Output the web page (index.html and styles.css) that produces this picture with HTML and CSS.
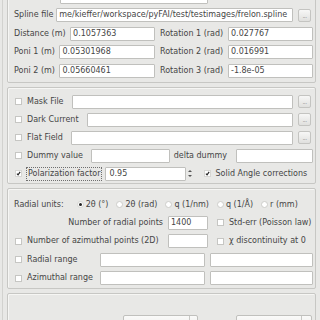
FILE: index.html
```html
<!DOCTYPE html>
<html lang="en">
<head>
  <meta charset="UTF-8" />
  <title>pyFAI integration</title>
  <link rel="stylesheet" href="styles.css">
</head>
<body>
  <div class="window">

    <div class="group geometry">
      <div class="row">
        <span class="input top-input"></span>
      </div>
      <div class="row">
        <span class="label">Spline file</span>
        <span class="input grow">me/kieffer/workspace/pyFAI/test/testimages/frelon.spline</span>
        <span class="dots">...</span>
      </div>
      <div class="pair">
        <div class="half"><span class="label">Distance (m)</span><span class="input grow">0.1057363</span></div>
        <div class="half"><span class="label">Rotation 1 (rad)</span><span class="input rot">0.027767</span></div>
      </div>
      <div class="pair">
        <div class="half"><span class="label">Poni 1 (m)</span><span class="input grow">0.05301968</span></div>
        <div class="half"><span class="label">Rotation 2 (rad)</span><span class="input rot">0.016991</span></div>
      </div>
      <div class="pair">
        <div class="half"><span class="label">Poni 2 (m)</span><span class="input grow">0.05660461</span></div>
        <div class="half"><span class="label">Rotation 3 (rad)</span><span class="input rot">-1.8e-05</span></div>
      </div>
    </div>

    <div class="group corrections">
      <div class="row">
        <span class="check"></span><span class="label wide">Mask File</span>
        <span class="input grow"></span><span class="dots">...</span>
      </div>
      <div class="row">
        <span class="check"></span><span class="label wide">Dark Current</span>
        <span class="input grow"></span><span class="dots">...</span>
      </div>
      <div class="row">
        <span class="check"></span><span class="label wide">Flat Field</span>
        <span class="input grow"></span><span class="dots">...</span>
      </div>
      <div class="row">
        <span class="check"></span><span class="label wide">Dummy value</span>
        <span class="input grow"></span>
        <span class="label delta">delta dummy</span>
        <span class="input dummy"></span>
      </div>
      <div class="row">
        <span class="check on"><svg viewBox="0 0 7 7"><path d="M1.3 3.6 L2.9 5.3 L5.8 1.2" /></svg></span>
        <span class="label focus">Polarization factor</span>
        <span class="input spin">0.95</span>
        <span class="arrows"><i class="up"></i><i class="down"></i></span>
        <span class="check on solid"><svg viewBox="0 0 7 7"><path d="M1.3 3.6 L2.9 5.3 L5.8 1.2" /></svg></span>
        <span class="label">Solid Angle corrections</span>
      </div>
    </div>

    <div class="group integration">
      <div class="row units">
        <span class="label">Radial units:</span>
        <span class="radio on"></span><span class="label">2θ (°)</span>
        <span class="radio"></span><span class="label">2θ (rad)</span>
        <span class="radio"></span><span class="label">q (1/nm)</span>
        <span class="radio"></span><span class="label">q (1/Å)</span>
        <span class="radio"></span><span class="label">r (mm)</span>
      </div>
      <div class="points">
        <span class="label right">Number of radial points</span>
        <span class="input">1400</span>
        <span class="opt"><span class="check"></span><span class="label">Std-err (Poisson law)</span></span>
      </div>
      <div class="points">
        <span class="opt"><span class="check"></span><span class="label">Number of azimuthal points (2D)</span></span>
        <span class="input"></span>
        <span class="opt"><span class="check"></span><span class="label">χ discontinuity at 0</span></span>
      </div>
      <div class="range">
        <span class="opt"><span class="check"></span><span class="label">Radial range</span></span>
        <span class="input"></span>
        <span class="input"></span>
      </div>
      <div class="range">
        <span class="opt"><span class="check"></span><span class="label">Azimuthal range</span></span>
        <span class="input"></span>
        <span class="input"></span>
      </div>
    </div>

    <div class="group actions">
      <div class="row">
        <span class="combo first"><span class="arrow-box"></span></span>
        <span class="combo second"><span class="arrow-box"></span></span>
      </div>
    </div>

  </div>
</body>
</html>
```

FILE: styles.css
```css
* {
  box-sizing: border-box;
  margin: 0;
  padding: 0;
}
body {
  background: #e8e8e6;
  font-family: "DejaVu Sans", sans-serif;
  font-size: 8px;
  color: #454545;
  width: 320px;
  height: 320px;
  overflow: hidden;
}
.window {
  margin-left: 2px;
  border-left: 1px solid #d2d2cf;
  height: 360px;
  padding: 0 4px 0 4px;
}
.group {
  border: 1px solid #c7c7c4;
  border-radius: 2px;
  box-shadow: inset 1px 1px 0 #f6f6f4;
  padding: 7px 2px 2px 6px;
  display: flex;
  flex-direction: column;
  gap: 4.4px;
  margin-bottom: 4px;
}
.geometry {
  margin-top: -14px;
  padding-top: 3px;
  padding-bottom: 4px;
}
.corrections {
  gap: 4px;
}
.integration {
  padding-top: 9px;
  padding-bottom: 3px;
}
.actions {
  padding-top: 21px;
  height: 60px;
}

.row {
  display: flex;
  align-items: center;
  height: 14px;
}
.label {
  white-space: nowrap;
  line-height: 14px;
}
.input {
  display: block;
  height: 14px;
  background: #fff;
  border: 1px solid #c0c0bd;
  border-radius: 1px;
  padding-left: 2px;
  line-height: 12px;
  white-space: nowrap;
  overflow: hidden;
}
.grow {
  flex: 1;
  min-width: 0;
}
.top-input {
  margin-left: 46px;
  width: 148px;
}
.row .label + .input {
  margin-left: 3px;
}
.row .label.wide + .input {
  margin-left: 8px;
}
.dots {
  width: 13px;
  height: 13px;
  margin-left: 5px;
  margin-right: 2px;
  border: 1px solid #c4c4c1;
  border-radius: 2px;
  background: linear-gradient(#f7f7f6, #e0e0de);
  color: #888;
  font-size: 6px;
  line-height: 12px;
  text-align: center;
  letter-spacing: -0.5px;
}

.pair {
  display: grid;
  grid-template-columns: 141px 1fr;
  column-gap: 5px;
  height: 14px;
}
.half {
  display: flex;
  align-items: center;
}
.half .input {
  margin-left: 4px;
}
.half .label + .input.grow {
  margin-left: 4.5px;
}
.rot {
  width: 85px;
  margin-left: auto !important;
}

.check {
  display: inline-block;
  flex: none;
  width: 7px;
  height: 7px;
  margin: 0 5px 0 1px;
  background: #fff;
  border: 1px solid #c6c6c3;
}
.check svg {
  display: block;
  width: 5px;
  height: 5px;
  fill: none;
  stroke: #222;
  stroke-width: 1.6;
}
.check.on {
  border-color: #d6d6d3;
}
.delta {
  margin-left: 4px;
}
.delta + .input {
  margin-left: 9px !important;
}
.dummy {
  width: 77px;
}
.focus {
  border: 1px dotted #6f6f6f;
  line-height: 12px;
  padding: 0 1px;
  margin-left: -1px;
}
.focus + .input {
  margin-left: 5px;
}
.spin {
  width: 81px;
  padding-left: 3px;
}
.arrows {
  display: flex;
  flex-direction: column;
  justify-content: center;
  gap: 3px;
  width: 6px;
  margin-left: 2px;
}
.arrows i {
  display: block;
  width: 0;
  height: 0;
  border-left: 2px solid transparent;
  border-right: 2px solid transparent;
}
.arrows .up {
  border-bottom: 2px solid #555;
}
.arrows .down {
  border-top: 2px solid #555;
}
.solid {
  margin-left: 10px;
  margin-right: 4px;
}

.units .label:first-child {
  margin-right: 5px;
}
.radio {
  flex: none;
  width: 7px;
  height: 7px;
  border-radius: 50%;
  background: #fff;
  border: 1px solid #cdcdca;
  margin-right: 2px;
  position: relative;
}
.radio.on {
  border-color: #d4d4d1;
}
.radio.on::after {
  content: "";
  position: absolute;
  left: 1px;
  top: 1px;
  width: 3px;
  height: 3px;
  border-radius: 50%;
  background: #222;
}
.units .label + .radio {
  margin-left: 8px;
}

.points {
  display: grid;
  grid-template-columns: 149px 40px 1fr;
  column-gap: 5px;
  height: 14px;
  align-items: center;
}
.right {
  text-align: right;
}
.opt {
  display: flex;
  align-items: center;
}
.points .opt:last-child .check {
  margin-left: 4px;
}
.range {
  display: grid;
  grid-template-columns: 81px 105px 1fr;
  column-gap: 5px;
  height: 14px;
  align-items: center;
}

.combo {
  display: flex;
  justify-content: flex-end;
  height: 14px;
  background: linear-gradient(#fafaf9, #ececea);
  border: 1px solid #c0c0bd;
  border-radius: 2px;
}
.combo .arrow-box {
  width: 8px;
  border-left: 1px solid #c8c8c5;
}
.combo.first {
  margin-left: 109px;
  width: 75px;
}
.combo.second {
  margin-left: 38px;
  width: 76px;
}
.combo.second .arrow-box {
  width: 10px;
}
```
